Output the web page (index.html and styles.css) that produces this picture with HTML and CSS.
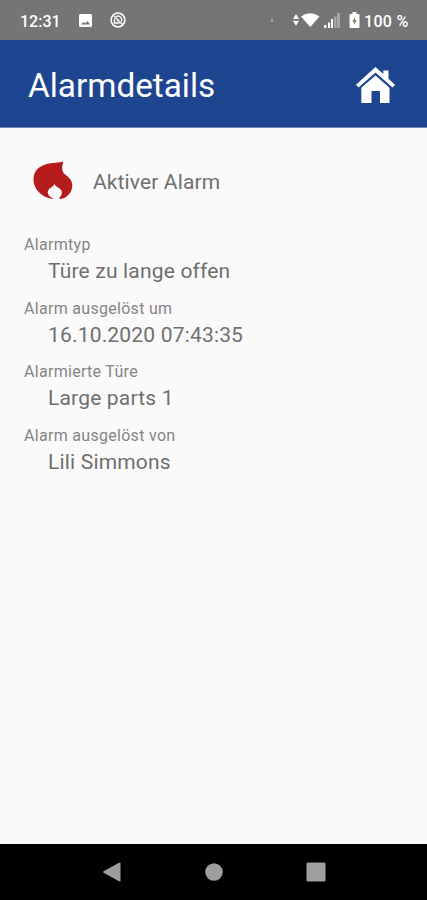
FILE: index.html
```html
<!DOCTYPE html>
<html lang="de">
<head>
	<meta charset="UTF-8">
	<meta name="viewport" content="width=device-width, initial-scale=1.0">
	<title>Alarmdetails</title>
	<link rel="stylesheet" href="styles.css">
</head>
<body>
	<div class="status-bar">
		<span class="clock">12:31</span>
		<svg class="icon-image" viewBox="0 0 13 13">
			<path fill="#fff" fill-rule="evenodd" d="M1.5 0H11.5Q13 0 13 1.500V11.500Q13 13 11.500 13H1.500Q0 13 0 11.500V1.500Q0 0 1.500 0ZM2 10.500H11L8.500 7L6.300 9.500L4.500 8Z"/>
		</svg>
		<svg class="icon-sync" viewBox="0 0 16 16" fill="none" stroke="#fff">
			<circle cx="8" cy="8" r="6.900" stroke-width="1.500"/>
			<path d="M4 4L12.500 12.500M6 4.500A4 4 0 0 1 11.500 9.500M4.500 6.500V11H9.500M7 8.500H9" stroke-width="1.300"/>
		</svg>
		<span class="dot"></span>
		<svg class="icon-wifi" viewBox="0 0 27 16" fill="#fff">
			<path d="M0 7L3 2L6 7ZM0 8.800H6L3 13.800Z"/>
			<path d="M8 4.500Q17.300-2 26.500 4.500L17.300 15Z"/>
		</svg>
		<svg class="icon-signal" viewBox="0 0 16 16" fill="#fff">
			<path d="M0 13H2.500V16H0ZM4 10.500H6V16H4ZM7 7H9V16H7Z"/>
			<path d="M10 4.500H12.500V16H10ZM13 1H16V16H13Z" opacity="0.35"/>
		</svg>
		<svg class="icon-battery" viewBox="0 0 11 16">
			<path fill="#fff" d="M3.500 0H7.500V2H9.500Q10.500 2 10.500 3V15Q10.500 16 9.500 16H1.500Q0.500 16 0.500 15V3Q0.500 2 1.500 2H3.500Z"/>
			<path fill="#757575" d="M6 5.500L3.200 9.500H5V12.800L7.800 8.500H6Z"/>
		</svg>
		<span class="percent">100 %</span>
	</div>

	<header>
		<h1>Alarmdetails</h1>
		<svg class="icon-home" viewBox="0 0 39 37" fill="#fff">
			<path d="M19.500 0L27.300 7V3.500H32.500V11.700L39 17.700L36.500 20.500L19.500 5.500L2.500 20.500L0 17.700Z"/>
			<path d="M19.500 8.500L33.500 20.800V36H24V24H15.500V36H5.300V20.800Z"/>
		</svg>
	</header>

	<main>
		<div class="alarm">
			<svg class="icon-flame" viewBox="0 0 40 39">
				<path fill="#b71c1c" d="M30.500 0.500C28.800 5 28.500 9 30.500 12C34 15.500 39.500 18 39.300 25C39 31 35 36 29 37.800C26.500 38.300 26 37.500 26.500 36.500C28.500 34.500 29.500 32 28.500 29.500C27 27 23.500 26.500 21.500 23C20.500 26 15 27 14.700 31C14.500 34 17.500 36 20.500 38C10 37 0.500 29 0.500 18.500C0.500 9 7 4.500 15 2.700C20 1.600 26 2 30.500 0.500Z"/>
			</svg>
			<span class="alarm-title">Aktiver Alarm</span>
		</div>

		<dl>
			<dt>Alarmtyp</dt>
			<dd>Türe zu lange offen</dd>
			<dt>Alarm ausgelöst um</dt>
			<dd>16.10.2020 07:43:35</dd>
			<dt>Alarmierte Türe</dt>
			<dd>Large parts 1</dd>
			<dt>Alarm ausgelöst von</dt>
			<dd>Lili Simmons</dd>
		</dl>
	</main>

	<nav>
		<svg viewBox="0 0 20 20"><path d="M18.500 1V19Q18.500 20 17 19.300L1.500 10.700Q0.800 10 1.500 9.300L17 0.700Q18.500 0 18.500 1Z"/></svg>
		<svg viewBox="0 0 20 20"><circle cx="10" cy="10" r="8.800"/></svg>
		<svg viewBox="0 0 20 20"><rect x="0.500" y="0.500" width="19" height="19" rx="1.500"/></svg>
	</nav>
</body>
</html>
```

FILE: styles.css
```css
*{
	box-sizing: border-box;
}

body{
	margin: 0;
	height: 900px;
	display: flex;
	flex-direction: column;
	font-family: Roboto, sans-serif;
	background-color: #fafafa;
	overflow: hidden;
}

.status-bar{
	height: 40px;
	flex: none;
	display: flex;
	align-items: center;
	padding: 0 17px 0 20px;
	background-color: #757575;
	color: #fff;
	font-size: 16px;
	font-weight: 500;
}

.clock{
	width: 59px;
	padding-top: 2px;
}

.icon-image{
	width: 13px;
	height: 13px;
}

.icon-sync{
	width: 16px;
	height: 16px;
	margin-left: 18px;
}

.dot{
	width: 2px;
	height: 3px;
	margin-left: auto;
	background-color: #aaa;
}

.icon-wifi{
	width: 27px;
	height: 16px;
	margin-left: 20px;
}

.icon-signal{
	width: 16px;
	height: 16px;
	margin-left: 4px;
}

.icon-battery{
	width: 11px;
	height: 16px;
	margin-left: 9px;
}

.percent{
	width: 46px;
	margin-left: 4px;
	padding-top: 2px;
	letter-spacing: 0.3px;
	white-space: nowrap;
}

header{
	height: 88px;
	flex: none;
	display: flex;
	align-items: center;
	justify-content: space-between;
	padding: 0 32px 0 28px;
	background-color: #1e458f;
	border-bottom: 1px solid #7088b8;
}

h1{
	margin: 0 0 -3px;
	color: #fff;
	font-size: 33.300px;
	font-weight: 400;
}

.icon-home{
	width: 39px;
	height: 37px;
	margin-top: 3px;
}

main{
	flex: 1;
	padding: 33px 24px 0;
	color: #6f6f6f;
}

.alarm{
	display: flex;
	align-items: center;
	height: 40px;
	padding-left: 9px;
}

.icon-flame{
	width: 40px;
	height: 39px;
	margin-top: -1px;
}

.alarm-title{
	margin-left: 20px;
	padding-top: 1px;
	font-size: 21px;
	letter-spacing: 0.130px;
}

dl{
	margin: 33px 0 0;
}

dt{
	height: 22px;
	line-height: 22px;
	font-size: 16px;
	letter-spacing: 0.300px;
	color: #858585;
}

dd{
	height: 30px;
	margin: 0 0 11.500px 24px;
	line-height: 30px;
	font-size: 21px;
	letter-spacing: 0.180px;
}

nav{
	height: 56px;
	flex: none;
	display: flex;
	align-items: center;
	justify-content: center;
	gap: 82px;
	background-color: #000;
	fill: #9e9e9e;
}

nav svg{
	width: 20px;
	height: 20px;
}
```
